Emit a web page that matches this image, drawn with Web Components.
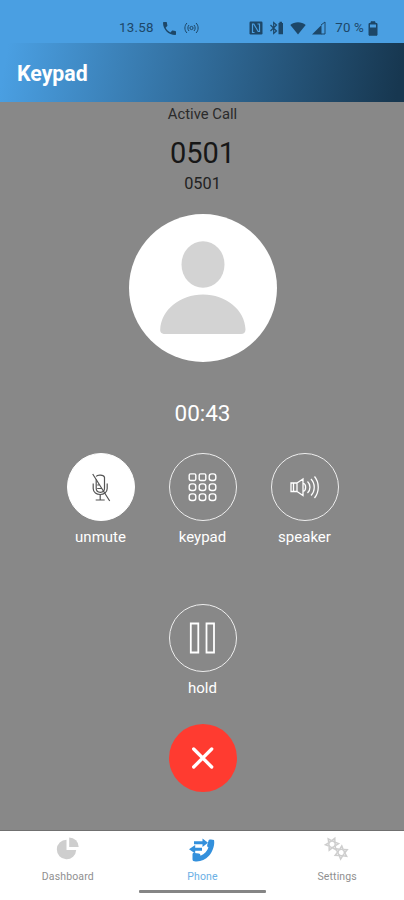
<!DOCTYPE html>
<html lang="en">
<head>
<meta charset="utf-8">
<meta name="viewport" content="width=device-width, initial-scale=1">
<title>Keypad</title>
<style>
  body {
    margin: 0;
    font-family: Roboto, "Liberation Sans", sans-serif;
  }
</style>
</head>
<body>
<phone-app>
  <status-bar slot="top" time="13.58" battery="70 %"></status-bar>
  <title-bar slot="top">Keypad</title-bar>
  <active-call name="0501" number="0501" duration="00:43">
    Active Call
    <call-button slot="actions" icon="mic" label="unmute" active></call-button>
    <call-button slot="actions" icon="keypad" label="keypad"></call-button>
    <call-button slot="actions" icon="speaker" label="speaker"></call-button>
    <call-button slot="hold" icon="pause" label="hold"></call-button>
    <call-button slot="end" icon="close" danger></call-button>
  </active-call>
  <tab-bar slot="bottom">
    <tab-item icon="chart" label="Dashboard"></tab-item>
    <tab-item icon="phone" label="Phone" selected></tab-item>
    <tab-item icon="gears" label="Settings"></tab-item>
  </tab-bar>
</phone-app>

<script>
const teeth = [0, 60, 120, 180, 240, 300]
  .map((angle) => `<path d="M-1.700 -3.200L0 -6.600L1.700 -3.200" transform="rotate(${angle})"/>`)
  .join('');
const gear = `<circle r="3.200"/>${teeth}`;

const keys = [14, 24, 34]
  .map((y) => [14, 24, 34]
    .map((x) => `<rect x="${x - 3.3}" y="${y - 3.3}" width="6.6" height="6.6" rx="${y === 14 && x < 34 ? 1.4 : 2.5}"/>`)
    .join(''))
  .join('');

// Drawn on a 48x48 grid, centred in the round buttons
const CALL_ICONS = {
  mic: `
    <g stroke="#555" stroke-width="1.2" transform="translate(-.8 0)">
      <path d="M20 13.500c1-2 7.600-2 8.300.8v11c0 5.400-8.300 5.400-8.300 0v-9"/>
      <path d="M17 20.500v5c0 8 14 8 14 0v-5M24 31.500v5.200M19.500 37h9"/>
      <path d="M21 22h3M21 25.500h5M16.500 11l17 27"/>
    </g>`,
  keypad: `<g stroke-width="1.400" transform="translate(-.5 .2)">${keys}</g>`,
  speaker: `
    <g stroke-width="1.300">
      <path d="M10 20h6v8.500h-6zM16 20l6-4v16.500l-6-4M12.500 20v8.500M22 20c3.500 1 3.500 7.500 0 8.500"/>
      <path d="M26.500 18.500c3.300 3 3.300 8.500 0 11.500M30 16c4.300 4.500 4.300 12 0 16.500M33.500 13.500c5 6 5 15.500 0 21.500"/>
    </g>`,
  pause: '<path stroke-width="1.800" d="M11.800 9.500h7.500v29h-7.500zM27.500 9.500H35v29h-7.500z"/>',
  close: '<path stroke-width="3.300" stroke-linecap="round" d="M14.700 15l18 18M32.700 15l-18 18"/>',
};

const TAB_ICONS = {
  chart: `
    <path d="M11.500 3.800A9.700 9.700 0 1 0 21.200 14h-9.700z"/>
    <path d="M14.200 1.500v9.500h9.500a9.500 9.500 0 0 0-9.500-9.500z"/>`,
  phone: `
    <path d="M19.500 4.800c.2-1.200 1.400-1.300 2.500-1.200l3 .5c1 5-1.300 11.800-5 15.700-4 4.200-9.500 6.500-14.700 5.500-1.600-.3-1.800-1-1.800-2.200v-4.600c0-1.300.7-1.800 2-1.600l4.200.6c1.500.2 1.700 1 1.800 2.300 4-1.800 7-5 8-8.500-1-.3-1.500-.9-1.300-2.200z"/>
    <path d="M5 5.300h8.500V2.500l5.500 4.200-5.500 4.200V8.200H5zM13 11.800H6.200V9L0 13.200l6.200 4.300v-2.700H13z"/>`,
  gears: `
    <g fill="none" stroke="currentColor" stroke-width="1.500">
      <g transform="translate(8 8.200) rotate(25)">${gear}</g>
      <g transform="translate(17.200 16.500) rotate(5)">${gear}</g>
    </g>`,
};

class PhoneApp extends HTMLElement {
  constructor() {
    super();
    this.attachShadow({ mode: 'open' });
  }

  connectedCallback() {
    this.shadowRoot.innerHTML = `
      <style>
        :host {
          display: grid;
          grid-template-rows: 102px 1fr 69px;
          height: 100vh;
          min-height: 900px;
          background: #888;
        }

        header {
          display: flex;
          flex-direction: column;
        }
      </style>
      <header><slot name="top"></slot></header>
      <slot></slot>
      <slot name="bottom"></slot>
    `;
  }
}

class StatusBar extends HTMLElement {
  constructor() {
    super();
    this.attachShadow({ mode: 'open' });
  }

  connectedCallback() {
    this.shadowRoot.innerHTML = `
      <style>
        :host {
          display: block;
          box-sizing: border-box;
          height: 43px;
          padding: 18px 26px 0 119px;
          background: #4a9fe2;
          color: #1d4768;
          font-size: 13.3px;
          line-height: 20px;
        }

        div, section {
          display: flex;
          align-items: center;
        }

        div {
          justify-content: space-between;
        }

        .left { gap: 8px; }
        .right { gap: 6px; }

        .time {
          width: 36px;
          letter-spacing: .25px;
        }

        .level {
          margin: 0 -2px 0 3px;
          letter-spacing: .2px;
          white-space: nowrap;
        }

        svg {
          display: block;
          fill: currentColor;
        }
      </style>
      <div>
        <section class="left">
          <span class="time">${this.getAttribute('time')}</span>
          <svg width="13" height="13" viewBox="3 3 18 18"><path d="M6.620 10.790c1.440 2.830 3.760 5.140 6.590 6.590l2.200-2.200c.27-.27.67-.36 1.020-.24 1.120.37 2.330.57 3.570.57.55 0 1 .45 1 1V20c0 .55-.45 1-1 1C10.610 21 3 13.390 3 4c0-.55.45-1 1-1h3.500c.55 0 1 .45 1 1 0 1.250.2 2.450.57 3.570.11.35.03.74-.25 1.020z"/></svg>
          <svg width="15" height="12" viewBox="0 0 15 12" style="fill:none;stroke:currentColor"><path d="M3 1C.2 3.500.2 8.500 3 11M12 1c2.800 2.500 2.800 7.500 0 10M5 3C3.500 4.500 3.500 7.500 5 9M10 3c1.500 1.500 1.500 4.500 0 6"/><circle cx="7.500" cy="6" r="1.600"/></svg>
        </section>
        <section class="right">
          <svg width="14" height="14" viewBox="0 0 14 14"><rect x=".5" y=".5" width="13" height="13" rx="1.200"/><path d="M5.500 11.500h-2V3h1.300l4.400 7.500h1.300V3h-2" fill="none" stroke="#4a9fe2" stroke-width="1.200"/></svg>
          <svg width="15" height="14" viewBox="0 0 15 14"><path d="M1.500 4l6 6L4.700 12.500V1.500L7.500 4l-6 6" fill="none" stroke="currentColor" stroke-width="1.200"/><path d="M9.500 2h1V.8h2.500V2h1v11.200H9.500z"/></svg>
          <svg width="16" height="14" viewBox="0 0 16 14"><path d="M8 13.500L.3 4C4.500.2 11.500.2 15.700 4z"/></svg>
          <svg width="14" height="14" viewBox="0 0 14 14"><path d="M0 13.500L9.500 4v9.500z"/><path d="M9 4l4-3v12H9" fill="none" stroke="currentColor"/></svg>
          <span class="level">${this.getAttribute('battery')}</span>
          <svg width="10" height="15" viewBox="0 0 10 15"><path d="M1 2.500h8v11.700H1zM3 .8h4v1.500H3z" stroke="currentColor"/><path d="M2 3.500h6v3H2z" fill="#4a9fe2"/></svg>
        </section>
      </div>
    `;
  }
}

class TitleBar extends HTMLElement {
  constructor() {
    super();
    this.attachShadow({ mode: 'open' });
  }

  connectedCallback() {
    this.shadowRoot.innerHTML = `
      <style>
        :host {
          display: flex;
          align-items: center;
          flex: 1;
          padding: 2px 17px 0;
          background: linear-gradient(100deg, #4a9fe2 2%, #173750 98%);
          color: #fff;
          font-size: 21.300px;
          font-weight: 700;
        }
      </style>
      <slot></slot>
    `;
  }
}

/**
 * @example
 * <active-call name="Name" number="0501" duration="00:43">
 *   Caption
 *   <call-button slot="actions" icon="keypad" label="keypad"></call-button>
 * </active-call>
 */
class ActiveCall extends HTMLElement {
  constructor() {
    super();
    this.attachShadow({ mode: 'open' });
  }

  connectedCallback() {
    this.shadowRoot.innerHTML = `
      <style>
        :host {
          display: flex;
          flex-direction: column;
          align-items: center;
          box-sizing: border-box;
          padding: 2px 0 0 1px;
          border-bottom: 1px solid #707070;
          background: #888;
          color: #171717;
        }

        .caption {
          font-size: 14.800px;
          line-height: 20px;
          color: #2b2b2b;
        }

        .name {
          margin-top: 11px;
          font-size: 29px;
          line-height: 36px;
        }

        .number {
          margin-top: 3px;
          color: #222;
          font-size: 16.300px;
          line-height: 20px;
        }

        .avatar {
          display: block;
          margin-top: 19.500px;
        }

        .duration {
          margin: 37.500px 0 26px;
          color: #fff;
          font-size: 22.500px;
          line-height: 28px;
        }

        .actions {
          display: flex;
          gap: 34px;
          margin-bottom: 57px;
        }

        .end {
          margin-top: 26px;
        }
      </style>
      <div class="caption"><slot></slot></div>
      <div class="name">${this.getAttribute('name')}</div>
      <div class="number">${this.getAttribute('number')}</div>
      <svg class="avatar" width="148" height="148" viewBox="0 0 148 148">
        <circle cx="74" cy="74" r="74" fill="#fff"/>
        <g fill="#d3d3d3">
          <ellipse cx="74" cy="50.500" rx="21.500" ry="23.300"/>
          <path d="M36 120c-3 0-5-1.500-4.800-4.500C32 96 51 80.500 74 80.500s42 15.500 42.500 35c0 3-1.800 4.500-4.500 4.500z"/>
        </g>
      </svg>
      <div class="duration">${this.getAttribute('duration')}</div>
      <div class="actions"><slot name="actions"></slot></div>
      <slot name="hold"></slot>
      <div class="end"><slot name="end"></slot></div>
    `;
  }
}

class CallButton extends HTMLElement {
  constructor() {
    super();
    this.attachShadow({ mode: 'open' });
  }

  connectedCallback() {
    const label = this.getAttribute('label');

    this.shadowRoot.innerHTML = `
      <style>
        :host {
          display: flex;
          flex-direction: column;
          align-items: center;
          width: 68px;
          color: #fff;
          font-size: 15px;
          line-height: 20px;
        }

        button {
          all: unset;
          display: grid;
          place-items: center;
          box-sizing: border-box;
          width: 68px;
          height: 68px;
          border: 1.500px solid #eee;
          border-radius: 50%;
          cursor: pointer;
        }

        :host([active]) button {
          border-color: #fff;
          background: #fff;
        }

        :host([danger]) button {
          border: 0;
          background: #ff3b30;
        }

        svg {
          fill: none;
          stroke: #fff;
        }

        .label {
          margin-top: 6px;
        }
      </style>
      <button><svg width="48" height="48" viewBox="0 0 48 48">${CALL_ICONS[this.getAttribute('icon')]}</svg></button>
      ${label ? `<span class="label">${label}</span>` : ''}
    `;
  }
}

class TabBar extends HTMLElement {
  constructor() {
    super();
    this.attachShadow({ mode: 'open' });
  }

  connectedCallback() {
    this.shadowRoot.innerHTML = `
      <style>
        :host {
          display: flex;
          flex-direction: column;
          align-items: center;
          background: #fff;
        }

        nav {
          display: grid;
          grid-template-columns: repeat(3, 1fr);
          width: 100%;
          height: 59px;
        }

        .home {
          width: 127px;
          height: 3px;
          margin-left: 1px;
          border-radius: 1px;
          background: #858585;
        }
      </style>
      <nav><slot></slot></nav>
      <div class="home"></div>
    `;
  }
}

class TabItem extends HTMLElement {
  constructor() {
    super();
    this.attachShadow({ mode: 'open' });
  }

  connectedCallback() {
    this.shadowRoot.innerHTML = `
      <style>
        :host {
          display: flex;
          flex-direction: column;
          align-items: center;
          padding: 5px 0 0 1px;
          color: #cecece;
          font-size: 10.500px;
          line-height: 14px;
          letter-spacing: .15px;
        }

        :host([selected]) {
          color: #3390dc;
        }

        svg {
          width: 26px;
          height: 26px;
          fill: currentColor;
        }

        span {
          margin-top: 8px;
          color: #8f8f8f;
        }

        :host([selected]) span {
          color: #6bb0e5;
        }
      </style>
      <svg viewBox="0 0 26 26">${TAB_ICONS[this.getAttribute('icon')]}</svg>
      <span>${this.getAttribute('label')}</span>
    `;
  }
}

customElements.define('phone-app', PhoneApp);
customElements.define('status-bar', StatusBar);
customElements.define('title-bar', TitleBar);
customElements.define('active-call', ActiveCall);
customElements.define('call-button', CallButton);
customElements.define('tab-bar', TabBar);
customElements.define('tab-item', TabItem);
</script>
</body>
</html>
